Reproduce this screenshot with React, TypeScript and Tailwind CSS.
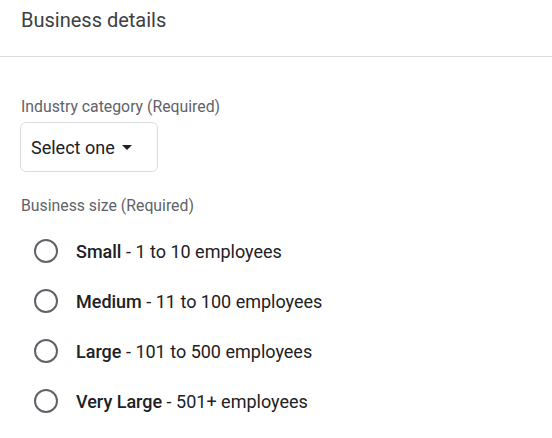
const sizes = [
  { name: "Small", range: "1 to 10 employees" },
  { name: "Medium", range: "11 to 100 employees" },
  { name: "Large", range: "101 to 500 employees" },
  { name: "Very Large", range: "501+ employees" },
]

export default function App() {
  return (
    <div className="w-[552px] h-[438px] bg-white text-[#202124] overflow-hidden" style={{ fontFamily: "Roboto, 'Liberation Sans', sans-serif" }}>
      <div className="h-[57px] border-b border-[#dadce0] px-[21px] pt-[6px]">
        <h1 className="text-[20px] leading-[28px] text-[#3c4043]">Business details</h1>
      </div>

      <div className="px-5 pt-[40px]">
        <div className="pl-px text-[15.8px] leading-5 text-[#5f6368]">Industry category (Required)</div>
        <button className="mt-[5px] h-[50px] w-[138px] flex items-center gap-[7px] rounded-[6px] border border-[#dadce0] pl-[10px] text-[18px] text-[#202124]">
          Select one
          <svg width="10" height="5" viewBox="0 0 10 5" className="mt-px">
            <path d="M0 0h10L5 5z" fill="#202124" />
          </svg>
        </button>

        <div className="mt-[24px] pl-px text-[15.8px] leading-5 text-[#5f6368]">Business size (Required)</div>

        <div className="mt-[10px] flex flex-col">
          {sizes.map((s) => (
            <label key={s.name} className="h-[50px] flex items-center gap-[18px] pl-[14px]">
              <span className="w-[24px] h-[24px] rounded-full border-2 border-[#5f6368]" />
              <span className="text-[18px]">
                <span className="font-medium">{s.name}</span> - {s.range}
              </span>
            </label>
          ))}
        </div>
      </div>
    </div>
  )
}
